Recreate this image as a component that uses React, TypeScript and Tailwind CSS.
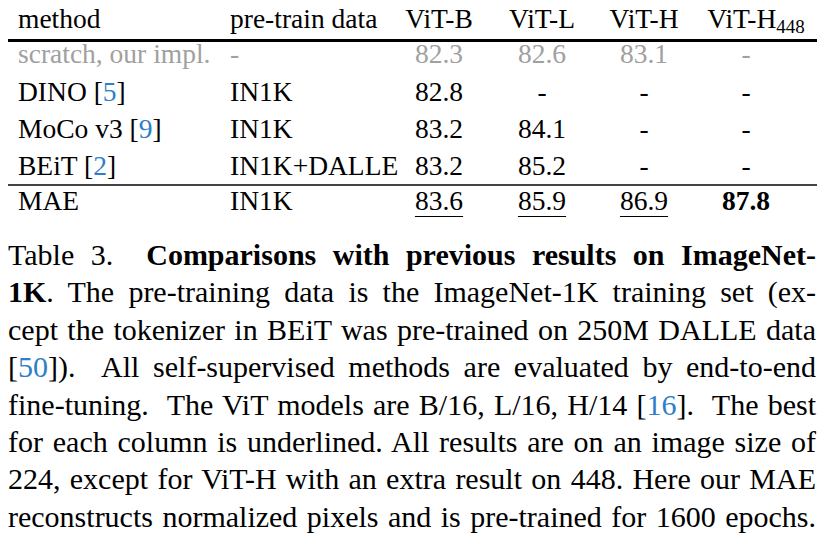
const serif = { fontFamily: '"Liberation Serif", "Times New Roman", serif' };

const Cite = ({ n }: { n: string }) => (
  <>
    [<span className="text-[#2e7ec8]">{n}</span>]
  </>
);

const cols = "grid grid-cols-[212px_180px_78px_128px_76px_135px]";

type Row = {
  method: React.ReactNode;
  data: string;
  vals: string[];
  gray?: boolean;
};

const rows: Row[] = [
  { method: "scratch, our impl.", data: "-", vals: ["82.3", "82.6", "83.1", "-"], gray: true },
  { method: <>DINO <Cite n="5" /></>, data: "IN1K", vals: ["82.8", "-", "-", "-"] },
  { method: <>MoCo v3 <Cite n="9" /></>, data: "IN1K", vals: ["83.2", "84.1", "-", "-"] },
  { method: <>BEiT <Cite n="2" /></>, data: "IN1K+DALLE", vals: ["83.2", "85.2", "-", "-"] },
];

const Cells = ({ r }: { r: Row }) => (
  <>
    <div className="pl-[10px] whitespace-nowrap">{r.method}</div>
    <div className="pl-[10px] whitespace-nowrap">{r.data}</div>
    {r.vals.map((v, i) => (
      <div key={i} className={`text-center ${i == 3 ? "pr-[7px]" : ""}`}>
        {v}
      </div>
    ))}
  </>
);

const lines: React.ReactNode[] = [
  <>
    Table 3.&nbsp; <b>Comparisons with previous results on ImageNet-</b>
  </>,
  <>
    <b>1K</b>. The pre-training data is the ImageNet-1K training set (ex-
  </>,
  <>cept the tokenizer in BEiT was pre-trained on 250M DALLE data</>,
  <>
    <Cite n="50" />).&nbsp; All self-supervised methods are evaluated by end-to-end
  </>,
  <>
    fine-tuning.&nbsp; The ViT models are B/16, L/16, H/14 <Cite n="16" />.&nbsp; The best
  </>,
  <>for each column is underlined. All results are on an image size of</>,
  <>224, except for ViT-H with an extra result on 448. Here our MAE</>,
  <>reconstructs normalized pixels and is pre-trained for 1600 epochs.</>,
];

export default function App() {
  return (
    <div className="w-[833px] h-[544px] bg-white text-black overflow-hidden" style={serif}>
      <div className="ml-[8px] w-[809px] text-[27.5px]">
        <div className={`${cols} h-[42px] leading-[37px] border-b-[3px] border-black`}>
          <div className="pl-[10px]">method</div>
          <div className="pl-[10px] whitespace-nowrap">pre-train data</div>
          <div className="text-center">ViT-B</div>
          <div className="text-center">ViT-L</div>
          <div className="text-center">ViT-H</div>
          <div className="pl-[13px] text-center whitespace-nowrap">
            ViT-H<sub className="text-[19px] relative top-[5px]">448</sub>
          </div>
        </div>

        {rows.map((r, i) => (
          <div
            key={i}
            className={`${cols} ${
              i == 0 ? "h-[31px] leading-[23px] text-[#a0a0a0]" : "h-[37px] leading-[37px]"
            }`}
          >
            <Cells r={r} />
          </div>
        ))}

        <div className={`${cols} h-[42px] leading-[30px] border-t-2 border-[#444]`}>
          <div className="pl-[10px]">MAE</div>
          <div className="pl-[10px]">IN1K</div>
          {["83.6", "85.9", "86.9"].map((v) => (
            <div key={v} className="text-center">
              <span className="underline decoration-1 underline-offset-[6px]">{v}</span>
            </div>
          ))}
          <div className="text-center pr-[7px] font-bold">87.8</div>
        </div>
      </div>

      <div className="mt-[10px] ml-[8px] w-[808px] text-[30px] leading-[37.4px]">
        {lines.map((l, i) => (
          <div key={i} className="text-justify [text-align-last:justify]">
            {l}
          </div>
        ))}
      </div>
    </div>
  );
}
